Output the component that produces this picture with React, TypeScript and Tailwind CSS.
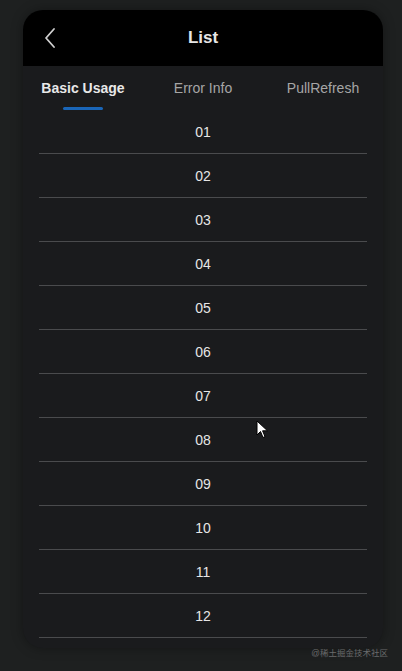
import React from "react";

const rows = ["01","02","03","04","05","06","07","08","09","10","11","12"];

export default function App() {
  return (
    <div className="relative w-[402px] h-[671px] overflow-hidden bg-[#1e2020]" style={{ fontFamily: '"Liberation Sans", Arial, sans-serif' }}>
      <div className="pt-[10px] px-[23px]">
        <div className="w-[360px] h-[638px] rounded-[20px] overflow-hidden bg-[#1a1b1d] shadow-[0_0_12px_rgba(0,0,0,0.35)]">
          <div className="relative h-[56px] bg-black flex items-center justify-center">
            <svg className="absolute left-[20px] top-[17px]" width="14" height="22" viewBox="0 0 14 22" fill="none">
              <path d="M11 2 L3 11 L11 20" stroke="#cfcfcf" strokeWidth="1.8" strokeLinecap="round" strokeLinejoin="round" />
            </svg>
            <span className="text-[17px] font-bold text-[#e6e6e6]">List</span>
          </div>
          <div className="relative h-[44px] flex items-center text-[14px]">
            <div className="flex-1 flex justify-center font-bold text-[#e8e8e8]">Basic Usage</div>
            <div className="flex-1 flex justify-center text-[#a6a6a6]">Error Info</div>
            <div className="flex-1 flex justify-center text-[#a6a6a6]">PullRefresh</div>
            <div className="absolute left-[40px] top-[41px] w-[40px] h-[3px] rounded-full bg-[#1a66b8]" />
          </div>
          <div className="px-[16px]">
            {rows.map((r) => (
              <div key={r} className="h-[44px] pt-[2px] flex items-center justify-center border-b border-[#4a4b4d] text-[14px] text-[#e6e6e6]">
                {r}
              </div>
            ))}
          </div>
        </div>
      </div>
      <div className="absolute right-[14px] top-[647px] text-[8.5px] text-[#6a6b6c]" style={{ fontFamily: '"Liberation Sans", "Noto Sans CJK SC", sans-serif' }}>
        @稀土掘金技术社区
      </div>
      <svg className="absolute left-[256px] top-[420px]" width="14" height="20" viewBox="0 0 14 20">
        <path d="M1 1 L1 15 L4.5 11.5 L7 17.5 L9 16.6 L6.6 10.8 L11.5 10.8 Z" fill="#ffffff" stroke="#000" strokeWidth="1" strokeLinejoin="round" />
      </svg>
    </div>
  );
}
